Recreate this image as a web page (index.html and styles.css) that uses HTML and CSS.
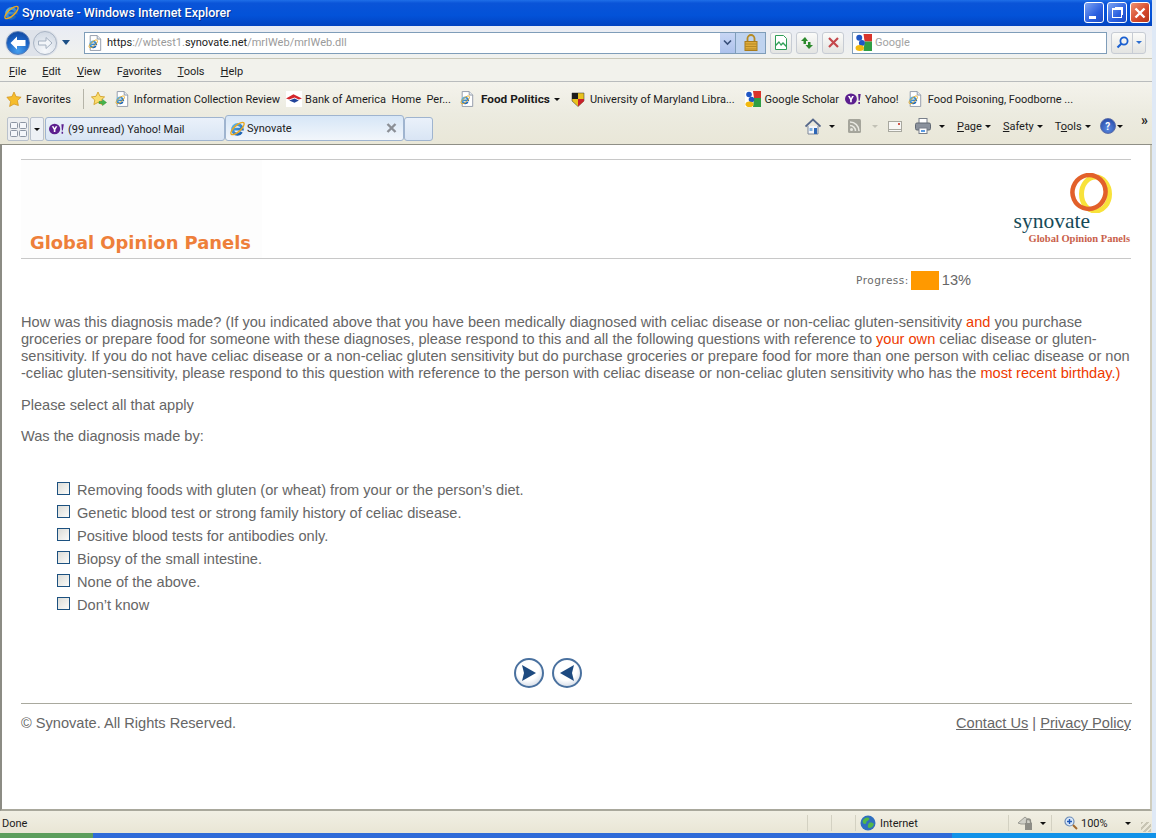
FILE: index.html
```html
<!DOCTYPE html>
<html lang="en">
<head>
  <meta charset="UTF-8">
  <title>Synovate - Windows Internet Explorer</title>
  <link rel="stylesheet" href="styles.css">
</head>
<body>
  <svg class="defs" width="0" height="0">
    <defs>
      <linearGradient id="ie-grad" x1="0" y1="0" x2="1" y2="1">
        <stop offset="0" stop-color="#5cb8ec"/>
        <stop offset="1" stop-color="#1458ad"/>
      </linearGradient>
      <symbol id="ie" viewBox="0 0 16 16">
        <path d="M3.800 8.600h8.700A4.600 4.600 0 1 0 11.800 11.300" fill="none" stroke="url(#ie-grad)" stroke-width="2.700"/>
        <ellipse cx="8" cy="8" rx="8" ry="3" transform="rotate(-42 8 8)" fill="none" stroke="#e9a820" stroke-width="1.300"/>
      </symbol>
      <symbol id="ie-page" viewBox="0 0 16 18">
        <path d="M2.500.5h8l4 4v13h-12z" fill="#fff" stroke="#8a94a4"/>
        <path d="M10.500.5v4h4" fill="#e4e8ef" stroke="#8a94a4"/>
        <use href="#ie" x="0" y="4" width="12" height="12"/>
      </symbol>
      <symbol id="yahoo" viewBox="0 0 20 14">
        <ellipse cx="7" cy="7" rx="7" ry="6.500" fill="#5c1f8f"/>
        <path d="M3.500 3.500h2.300L7 6l1.300-2.500h2.200L8 8v2.800H6V8z" fill="#fff"/>
        <path d="M15.500 1h3l-1.200 8h-1.200zM15.700 10.500h1.900v2.300h-1.900z" fill="#5c1f8f"/>
      </symbol>
      <symbol id="google" viewBox="0 0 16 16">
        <rect width="16" height="16" fill="#fff"/>
        <path d="M8 0h8v7H9z" fill="#d9342b"/>
        <path d="M9 7h7v9H8z" fill="#2f9e44"/>
        <circle cx="4" cy="3.500" r="2.800" fill="#1f56c4"/>
        <circle cx="6.500" cy="8.500" r="2.800" fill="#1f56c4"/>
        <ellipse cx="4.500" cy="13.200" rx="4" ry="2.800" fill="#f2b90f"/>
      </symbol>
    </defs>
  </svg>

  <header class="titlebar">
    <svg width="17" height="17"><use href="#ie"/></svg>
    <span class="title-text">Synovate - Windows Internet Explorer</span>
    <div class="win-buttons">
      <div class="win-btn"><span class="win-min"></span></div>
      <div class="win-btn"><span class="win-max"></span></div>
      <div class="win-btn win-close">
        <svg width="14" height="14" viewBox="0 0 14 14"><path d="M2.500 2.500l9 9M11.500 2.500l-9 9" stroke="#fff" stroke-width="2.400"/></svg>
      </div>
    </div>
  </header>

  <div class="addressbar">
    <div class="nav-pill">
      <div class="nav-circle nav-back">
        <svg width="20" height="20" viewBox="0 0 20 20"><path d="M2.500 10l6.500-6.500V7h8.500v6H9v3.500z" fill="#fff"/></svg>
      </div>
      <div class="nav-circle nav-fwd">
        <svg width="18" height="18" viewBox="0 0 18 18"><path d="M16 9L10 3.500V7H2.500v4H10v3.500z" fill="#f2f5f9" stroke="#a4b0c0"/></svg>
      </div>
    </div>
    <span class="drop-blue"></span>
    <div class="url-box">
      <svg width="14" height="16"><use href="#ie-page"/></svg>
      <span class="url-text">https<span class="url-dim">://wbtest1.</span>synovate.net<span class="url-dim">/mrIWeb/mrIWeb.dll</span></span>
      <div class="url-drop">
        <svg width="9" height="7" viewBox="0 0 9 7"><path d="M1 1.500l3.500 3.500L8 1.500" fill="none" stroke="#39507a" stroke-width="1.600"/></svg>
      </div>
      <div class="url-lock">
        <svg width="14" height="17" viewBox="0 0 14 17">
          <path d="M3.500 8V4.500a3.500 3.500 0 0 1 7 0V8" fill="none" stroke="#b58a24" stroke-width="1.800"/>
          <rect x="1" y="7.500" width="12" height="9" fill="#e0ab3a" stroke="#a87c1c"/>
          <path d="M1 10h12M1 12.500h12M1 15h12" stroke="#b58a24"/>
        </svg>
      </div>
    </div>
    <div class="tool-btn">
      <svg width="12" height="15" viewBox="0 0 12 15"><path d="M.5.500h8l3 3v11H.5z" fill="#fff" stroke="#2f9e57"/><path d="M1 9l3-3 2 3 2-2 3 3v2l-3-3-2 2-2-3-3 3z" fill="#2f9e57"/></svg>
    </div>
    <div class="tool-btn">
      <svg width="14" height="14" viewBox="0 0 14 14"><path d="M5 1L1 5h2.500v3H6V5h2zM9 13l4-4h-2.500V6H8v3H5.500z" fill="#2c8a2c"/></svg>
    </div>
    <div class="tool-btn">
      <svg width="11" height="11" viewBox="0 0 11 11"><path d="M1 1l9 9M10 1l-9 9" stroke="#c4474c" stroke-width="2.200"/></svg>
    </div>
    <div class="search-box">
      <svg width="17" height="17"><use href="#google"/></svg>
      <span class="search-text">Google</span>
    </div>
    <div class="search-btns">
      <div class="search-go">
        <svg width="13" height="13" viewBox="0 0 13 13"><circle cx="8" cy="5" r="3.600" fill="none" stroke="#1a5fd0" stroke-width="1.800"/><path d="M5.500 7.500L1.500 11.500" stroke="#1a5fd0" stroke-width="2.200"/></svg>
      </div>
      <div class="search-drop"><span class="drop-blue drop-small"></span></div>
    </div>
  </div>

  <nav class="menubar">
    <span><u>F</u>ile</span>
    <span><u>E</u>dit</span>
    <span><u>V</u>iew</span>
    <span>F<u>a</u>vorites</span>
    <span><u>T</u>ools</span>
    <span><u>H</u>elp</span>
  </nav>

  <div class="favbar">
    <div class="fav-main">
      <svg width="16" height="16" viewBox="0 0 16 16"><path d="M8 1l2.100 4.600 5 .6-3.700 3.400 1 4.900L8 13.100l-4.400 2.400 1-4.900L.9 6.200l5-.6z" fill="#f6bd2c" stroke="#d08f16" stroke-width=".7"/></svg>
      <span>Favorites</span>
    </div>
    <span class="fav-sep"></span>
    <svg class="fav-add" width="16" height="16" viewBox="0 0 16 16">
      <path d="M7 1l2 4.300 4.600.6-3.400 3.100.9 4.600L7 11.400l-4.100 2.200.9-4.600L.4 5.900 5 5.300z" fill="#f9dc6d" stroke="#cf9a1d" stroke-width=".8"/>
      <path d="M8 10.500h3.500V8.500l4 3-4 3v-2H8z" fill="#43b649" stroke="#2b8a30" stroke-width=".5"/>
    </svg>
    <div class="fav-item fav-first"><svg width="14" height="16"><use href="#ie-page"/></svg><span>Information Collection Review</span></div>
    <div class="fav-item fav-boa">
      <svg width="16" height="16" viewBox="0 0 15 15"><rect width="15" height="15" fill="#fff"/><path d="M0 7l7-4 8 4-3 1-4-2L3 8z" fill="#d4252c"/><path d="M3 9l5-2L12 9 8 11z" fill="#22449a"/></svg>
      <span>Bank of America  Home  Per...</span>
    </div>
    <div class="fav-item fav-politics"><svg width="14" height="16"><use href="#ie-page"/></svg><b>Food Politics</b><span class="drop-black"></span></div>
    <div class="fav-item fav-umd">
      <svg width="14" height="15" viewBox="0 0 14 15"><path d="M1 1h12v8l-6 5.500L1 9z" fill="#e8c21e" stroke="#333" stroke-width=".5"/><path d="M1 1h6v6H1z" fill="#1c1c1c"/><path d="M7 7h6v2l-6 5.500z" fill="#c8202c"/></svg>
      <span>University of Maryland Libra...</span>
    </div>
    <div class="fav-item fav-scholar"><svg width="16" height="16"><use href="#google"/></svg><span>Google Scholar</span></div>
    <div class="fav-item fav-yahoo"><svg width="17" height="12"><use href="#yahoo"/></svg><span>Yahoo!</span></div>
    <div class="fav-item fav-food"><svg width="14" height="16"><use href="#ie-page"/></svg><span>Food Poisoning, Foodborne ...</span></div>
  </div>

  <div class="tabbar">
    <div class="tab-tools">
      <div class="tab-quick">
        <svg width="17" height="15" viewBox="0 0 17 15"><g fill="#f4f6fa" stroke="#8c95a3"><rect x=".5" y=".5" width="7" height="6" rx="1"/><rect x="9.500" y=".5" width="7" height="6" rx="1"/><rect x=".5" y="8.500" width="7" height="6" rx="1"/><rect x="9.500" y="8.500" width="7" height="6" rx="1"/></g></svg>
      </div>
      <div class="tab-list"><span class="drop-black"></span></div>
    </div>
    <div class="tab tab-yahoo">
      <svg width="16" height="12"><use href="#yahoo"/></svg>
      <span>(99 unread) Yahoo! Mail</span>
    </div>
    <div class="tab tab-active">
      <svg width="17" height="17"><use href="#ie"/></svg>
      <span class="tab-name">Synovate</span>
      <svg width="11" height="10" viewBox="0 0 11 10"><path d="M1.500 1l8 8M9.500 1l-8 8" stroke="#8b8f96" stroke-width="2.400"/></svg>
    </div>
    <div class="tab tab-new"></div>
    <div class="cmdbar">
      <div class="cmd cmd-home">
        <svg width="16" height="17" viewBox="0 0 16 17"><path d="M3 8v8h10V8" fill="#f4f6fa" stroke="#7d8697"/><path d="M.5 8.500L8 1.500l7.500 7" fill="none" stroke="#56688a" stroke-width="1.800"/><rect x="9" y="10" width="3" height="6" fill="#2d66b5"/><rect x="4.500" y="10" width="3" height="3" fill="#7fb0de"/></svg>
        <span class="drop-black"></span>
      </div>
      <div class="cmd cmd-rss">
        <svg width="13" height="14" viewBox="0 0 13 14"><rect width="13" height="14" rx="1.500" fill="#a5a59b"/><circle cx="3.500" cy="10.500" r="1.500" fill="#e9e9e2"/><path d="M2 6.500a5.500 5.500 0 0 1 5.500 5.500M2 3a9 9 0 0 1 9 9" fill="none" stroke="#e9e9e2" stroke-width="1.500"/></svg>
        <span class="drop-grey"></span>
      </div>
      <div class="cmd cmd-mail">
        <svg width="14" height="11" viewBox="0 0 14 11"><rect x=".5" y=".5" width="13" height="10" fill="#f7f7f5" stroke="#a8a89f"/><path d="M.5 8.500h13" stroke="#a8a89f"/><rect x="10" y="2" width="2" height="2" fill="#d0574c"/></svg>
      </div>
      <div class="cmd cmd-print">
        <svg width="16" height="16" viewBox="0 0 16 16"><rect x="4" y=".5" width="8" height="5" fill="#fff" stroke="#787f8a"/><rect x=".5" y="5" width="15" height="7" rx="1.500" fill="#8a919c" stroke="#616873"/><rect x="4" y="10" width="8" height="5.500" fill="#fff" stroke="#787f8a"/><rect x="6" y="12" width="4" height="2" fill="#5a9ae0"/></svg>
        <span class="drop-black"></span>
      </div>
      <div class="cmd cmd-text"><span><u>P</u>age</span><span class="drop-black"></span></div>
      <div class="cmd cmd-text"><span><u>S</u>afety</span><span class="drop-black"></span></div>
      <div class="cmd cmd-text"><span>T<u>o</u>ols</span><span class="drop-black"></span></div>
      <div class="cmd cmd-help"><span class="help-ball">?</span><span class="drop-black"></span></div>
      <span class="cmd-more">»</span>
    </div>
  </div>

  <main class="page">
    <div class="survey">
      <div class="brand">
        <div class="brand-left">
          <h1>Global Opinion Panels</h1>
        </div>
        <div class="logo">
          <svg class="logo-ring" width="42" height="40" viewBox="0 0 42 40">
            <ellipse cx="25.500" cy="21" rx="14" ry="17" fill="none" stroke="#f8e23a" stroke-width="5"/>
            <ellipse cx="19" cy="19" rx="16.500" ry="17" transform="rotate(20 19 19)" fill="none" stroke="#e2602a" stroke-width="4.500"/>
          </svg>
          <span class="logo-name">synovate</span>
          <span class="logo-sub">Global Opinion Panels</span>
        </div>
      </div>

      <div class="progress">
        <span class="progress-label">Progress:</span>
        <span class="progress-bar"></span>
        <span class="progress-num">13%</span>
      </div>

      <p class="question">How was this diagnosis made? (If you indicated above that you have been medically diagnosed with celiac disease or non-celiac gluten-sensitivity <em>and</em> you purchase<br>groceries or prepare food for someone with these diagnoses, please respond to this and all the following questions with reference to <em>your own</em> celiac disease or gluten-<br>sensitivity. If you do not have celiac disease or a non-celiac gluten sensitivity but do purchase groceries or prepare food for more than one person with celiac disease or non<br>-celiac gluten-sensitivity, please respond to this question with reference to the person with celiac disease or non-celiac gluten sensitivity who has the <em>most recent birthday.)</em></p>
      <p class="hint">Please select all that apply</p>
      <p class="hint">Was the diagnosis made by:</p>

      <ul class="answers">
        <li><input type="checkbox"><span>Removing foods with gluten (or wheat) from your or the person’s diet.</span></li>
        <li><input type="checkbox"><span>Genetic blood test or strong family history of celiac disease.</span></li>
        <li><input type="checkbox"><span>Positive blood tests for antibodies only.</span></li>
        <li><input type="checkbox"><span>Biopsy of the small intestine.</span></li>
        <li><input type="checkbox"><span>None of the above.</span></li>
        <li><input type="checkbox"><span>Don’t know</span></li>
      </ul>

      <div class="nav-buttons">
        <button class="round-btn" type="button" aria-label="Next">
          <svg width="16" height="16" viewBox="0 0 16 16"><path d="M1 0l14 8-14 8 2-8z" fill="#1d4a80"/></svg>
        </button>
        <button class="round-btn" type="button" aria-label="Back">
          <svg width="16" height="16" viewBox="0 0 16 16"><path d="M15 0L1 8l14 8-2-8z" fill="#1d4a80"/></svg>
        </button>
      </div>

      <footer class="footer">
        <span>© Synovate. All Rights Reserved.</span>
        <span><a href="#">Contact Us</a> | <a href="#">Privacy Policy</a></span>
      </footer>
    </div>
  </main>

  <div class="statusbar">
    <span class="status-text">Done</span>
    <span class="status-cell"></span>
    <span class="status-cell"></span>
    <div class="status-zone">
      <svg width="16" height="16" viewBox="0 0 16 16"><circle cx="8" cy="8" r="7.500" fill="#2f6fc0"/><path d="M3 5c2-3 5-3 6-2s-1 3-2 3 0 3-2 3-3-2-2-4zM9 8c2-1 4 0 5 1-1 3-3 4-5 4s-1-4 0-5z" fill="#53b848"/></svg>
      <span>Internet</span>
    </div>
    <div class="status-shield">
      <svg width="17" height="16" viewBox="0 0 17 16"><path d="M1 8l7-6 6 5v2H4z" fill="#d0d0c8" stroke="#9b9b93"/><rect x="8" y="8" width="7" height="7" fill="#8d8d86"/><path d="M9.500 8V6a2 2 0 0 1 4 0v2" fill="none" stroke="#8d8d86" stroke-width="1.300"/></svg>
      <span class="drop-black"></span>
    </div>
    <div class="status-zoom">
      <svg width="14" height="14" viewBox="0 0 14 14"><circle cx="5.500" cy="5.500" r="4.500" fill="#d9e8fa" stroke="#6c8cb7" stroke-width="1.200"/><path d="M3 5.500h5M5.500 3v5" stroke="#1e57b5" stroke-width="1.400"/><path d="M9 9l4 4" stroke="#a2682c" stroke-width="2"/></svg>
      <span>100%</span>
      <span class="drop-black drop-right"></span>
    </div>
    <span class="grip"></span>
  </div>
  <div class="taskbar">
    <span class="start-strip"></span>
    <span class="task-strip"></span>
    <span class="task-bright"></span>
  </div>
</body>
</html>
```

FILE: styles.css
```css
* {
  box-sizing: border-box;
}

html, body {
  height: 100%;
}

body {
  margin: 0;
  width: 1156px;
  height: 838px;
  display: flex;
  flex-direction: column;
  overflow: hidden;
  background: #dfe9f6;
  font-family: Roboto, sans-serif;
  font-size: 11px;
  color: #1c1c1c;
}

.defs {
  position: absolute;
}

svg {
  display: block;
  flex: none;
}

/* every window row stops short of the desktop strip on the right */
.titlebar,
.addressbar,
.menubar,
.favbar,
.tabbar,
.page,
.statusbar {
  width: 1152px;
}

/* title bar */
.titlebar {
  height: 26px;
  flex: none;
  display: flex;
  align-items: center;
  padding: 0 2px 1px 3px;
  background: linear-gradient(#1f6fe8 0, #0a54d8 12%, #0352d8 60%, #0243c0 100%);
}

.title-text {
  margin-left: 2px;
  color: #fff;
  font-size: 12.500px;
  font-weight: 500;
  text-shadow: 1px 1px 0 #03308f;
}

.win-buttons {
  margin-left: auto;
  display: flex;
  gap: 3px;
}

.win-btn {
  width: 20px;
  height: 21px;
  display: flex;
  align-items: center;
  justify-content: center;
  border: 1px solid #fff;
  border-radius: 3px;
  background: linear-gradient(135deg, #7ea4f2, #2a5fe0 60%, #1d4cc4);
}

.win-close {
  background: linear-gradient(135deg, #ee9170, #d4482a 60%, #b53418);
}

.win-min {
  width: 7px;
  height: 3px;
  margin-top: 10px;
  margin-right: 3px;
  background: #fff;
}

.win-max {
  width: 10px;
  height: 10px;
  border: 1px solid #fff;
  border-top-width: 2px;
  box-shadow: 2px -2px 0 -1px #fff;
}

/* address row */
.addressbar {
  height: 33px;
  flex: none;
  display: flex;
  align-items: center;
  padding: 1px 0 0 5px;
  background: linear-gradient(#e9ecf4, #f1f2ee);
  border-bottom: 1px solid #c9c7b8;
}

.nav-pill {
  display: flex;
  align-items: center;
  gap: 3px;
  padding: 1px;
  border-radius: 14px;
  background: #dfe3ea;
}

.nav-circle {
  width: 24px;
  height: 24px;
  border-radius: 50%;
  display: flex;
  align-items: center;
  justify-content: center;
}

.nav-back {
  border: 1px solid #5a7fb8;
  background: radial-gradient(circle at 50% 85%, #49a0ee, #1a62c4 55%, #0e3f92);
}

.nav-fwd {
  border: 1px solid #a9b4c4;
  background: radial-gradient(circle at 50% 85%, #f6f8fb, #ccd5e1);
}

.drop-blue {
  width: 0;
  height: 0;
  margin-left: 4px;
  border-style: solid;
  border-width: 5px 4px 0 4px;
  border-color: #1c4f86 transparent transparent;
}

.url-box {
  width: 682px;
  height: 22px;
  margin-left: 14px;
  display: flex;
  align-items: center;
  padding-left: 3px;
  background: #fff;
  border: 1px solid #7f9db9;
}

.url-text {
  margin-left: 5px;
  color: #222;
}

.url-dim {
  color: #9a9a9a;
}

.url-drop {
  width: 15px;
  height: 20px;
  margin-left: auto;
  display: flex;
  align-items: center;
  justify-content: center;
  background: linear-gradient(#c8d6f4, #adc2ec);
}

.url-lock {
  width: 30px;
  height: 20px;
  display: flex;
  align-items: center;
  justify-content: center;
  background: #bfd3ef;
  border-left: 1px solid #7f9db9;
}

.tool-btn {
  width: 22px;
  height: 22px;
  margin-left: 4px;
  display: flex;
  align-items: center;
  justify-content: center;
  border: 1px solid #c7ccd4;
  border-radius: 3px;
  background: linear-gradient(#fbfbf9, #e3e4e2);
}

.search-box {
  width: 255px;
  height: 22px;
  margin-left: 8px;
  display: flex;
  align-items: center;
  gap: 3px;
  padding-left: 2px;
  background: #fff;
  border: 1px solid #7f9db9;
}

.search-text {
  color: #a3a3a3;
}

.search-btns {
  height: 22px;
  margin-left: 4px;
  display: flex;
  border: 1px solid #c7ccd4;
  border-radius: 3px;
  background: linear-gradient(#fbfbf9, #e3e4e2);
}

.search-go {
  width: 21px;
  display: flex;
  align-items: center;
  justify-content: center;
  border-right: 1px solid #c7ccd4;
}

.search-drop {
  width: 12px;
  display: flex;
  align-items: center;
  justify-content: center;
}

.drop-small {
  margin-left: 0;
  border-color: #2d6fd0 transparent transparent;
  border-width: 3px 3px 0 3px;
}

/* menu row */
.menubar {
  height: 23px;
  flex: none;
  display: flex;
  align-items: center;
  gap: 16px;
  padding: 2px 0 0 9px;
  background: #f2f2ec;
  border-bottom: 1px solid #b9bcbd;
}

/* favorites row */
.favbar {
  height: 32px;
  flex: none;
  display: flex;
  align-items: center;
  padding: 3px 0 1px 6px;
  background: linear-gradient(#f4f3ec, #ecebe0);
  white-space: pre;
}

.fav-main {
  display: flex;
  align-items: center;
  gap: 4px;
}

.fav-sep {
  width: 1px;
  height: 20px;
  margin: 0 7px 0 12px;
  background: #b5b4a8;
}

.fav-item {
  display: flex;
  align-items: center;
  gap: 5px;
}

.fav-first {
  margin-left: 8px;
}

.fav-boa {
  margin-left: 6px;
  gap: 3px;
}

.fav-politics {
  margin-left: 9px;
  gap: 7px;
}

.fav-politics b {
  font-size: 11.800px;
}

.fav-politics .drop-black {
  margin-left: -3px;
}

.fav-umd {
  margin-left: 11px;
}

.fav-scholar {
  margin-left: 10px;
  gap: 4px;
}

.fav-yahoo {
  margin-left: 6px;
  gap: 3px;
}

.fav-food {
  margin-left: 9px;
  gap: 6px;
}

.drop-black {
  width: 0;
  height: 0;
  border-style: solid;
  border-width: 3px 3px 0 3px;
  border-color: #111 transparent transparent;
}

.drop-grey {
  width: 0;
  height: 0;
  border-style: solid;
  border-width: 3px 3px 0 3px;
  border-color: #c2c1b6 transparent transparent;
}

/* tabs + command bar */
.tabbar {
  height: 31px;
  flex: none;
  display: flex;
  align-items: flex-end;
  padding: 0 0 3px 7px;
  background: linear-gradient(#ecebe0, #e9e7d8);
  border-bottom: 1px solid #8f8f86;
}

.tab-tools {
  height: 24px;
  display: flex;
  gap: 1px;
}

.tab-quick {
  width: 22px;
  display: flex;
  align-items: center;
  justify-content: center;
  border: 1px solid #b9c1cc;
  border-radius: 2px;
  background: #eceef0;
}

.tab-list {
  width: 14px;
  display: flex;
  align-items: center;
  justify-content: center;
  border: 1px solid #b9c1cc;
  border-radius: 2px;
  background: #eef1f5;
}

.tab {
  display: flex;
  align-items: center;
  border: 1px solid #9fb4cf;
  border-radius: 3px;
  background: linear-gradient(#eaf1fa, #d9e5f4);
}

.tab-yahoo {
  width: 180px;
  height: 24px;
  margin-left: 1px;
  padding-left: 3px;
  gap: 3px;
}

.tab-active {
  width: 179px;
  height: 26px;
  padding: 0 6px 0 3px;
  gap: 1px;
  background: linear-gradient(#d6e6f7, #f2f6fb);
}

.tab-name {
  flex: 1;
}

.tab-new {
  width: 29px;
  height: 24px;
}

.cmdbar {
  flex: 1;
  height: 24px;
  display: flex;
  align-items: center;
  padding: 0 0 6px 372px;
  position: relative;
}

.cmd {
  display: flex;
  align-items: center;
}

.cmd-home {
  gap: 8px;
}

.cmd-rss {
  margin-left: 13px;
  gap: 11px;
}

.cmd-mail {
  margin-left: 10px;
}

.cmd-print {
  margin-left: 13px;
  gap: 8px;
}

.cmd-text {
  margin-left: 12px;
  gap: 3px;
}

.cmd-help {
  margin-left: 9px;
  gap: 1px;
}

.help-ball {
  width: 16px;
  height: 16px;
  display: flex;
  align-items: center;
  justify-content: center;
  border-radius: 50%;
  border: 1px solid #5c6ea8;
  background: radial-gradient(circle at 50% 70%, #5b8be0, #1e3fa0);
  color: #fff;
  font-weight: 700;
  font-size: 10px;
}

.cmd-more {
  position: absolute;
  top: -4px;
  right: 4px;
  font-size: 14px;
  font-weight: 700;
  line-height: 14px;
}

/* page */
.page {
  flex: 1;
  min-height: 0;
  padding: 14px 0 0 19px;
  background: #fff;
  border-left: 2px solid #8c8c84;
  border-right: 2px solid #cfcdbe;
  border-bottom: 2px solid #a9a89c;
  font-family: "Liberation Sans", sans-serif;
  font-size: 14.600px;
  color: #666;
}

.survey {
  width: 1110px;
}

.brand {
  height: 100px;
  display: flex;
  justify-content: space-between;
  border-top: 1px solid #c8c8c8;
  border-bottom: 1px solid #c8c8c8;
}

.brand-left {
  width: 241px;
  display: flex;
  align-items: flex-end;
  padding: 0 0 4px 9px;
  background: #fdfdfd;
}

.brand-left h1 {
  margin: 0;
  font-family: "DejaVu Sans", sans-serif;
  font-size: 17.900px;
  font-weight: 700;
  color: #ee7f3a;
  line-height: 22px;
}

.logo {
  width: 120px;
  display: flex;
  flex-direction: column;
  align-items: flex-end;
  font-family: "Liberation Serif", serif;
}

.logo-ring {
  margin: 13px 19px 0 0;
}

.logo-name {
  margin: -3px 41px 0 0;
  font-size: 21.500px;
  line-height: 22px;
  color: #164a58;
}

.logo-sub {
  margin: 1px 1px 0 0;
  font-size: 10.500px;
  font-weight: 700;
  line-height: 11px;
  color: #c9614a;
}

.progress {
  height: 20px;
  margin-top: 11px;
  display: flex;
  align-items: center;
  padding-left: 835px;
}

.progress-label {
  font-family: "DejaVu Sans", sans-serif;
  font-size: 10.500px;
  letter-spacing: .5px;
  color: #6a6a6a;
}

.progress-bar {
  width: 28px;
  height: 19px;
  margin-left: 2px;
  background: #f90;
}

.progress-num {
  margin-left: 3px;
}

.question,
.hint {
  margin: 0;
  line-height: 17px;
}

.question {
  margin-top: 24px;
  white-space: nowrap;
}

.question em {
  font-style: normal;
  color: #ee3a00;
}

.hint {
  margin-top: 15px;
}

.hint + .hint {
  margin-top: 14px;
}

.answers {
  list-style: none;
  margin: 33px 0 0;
  padding: 0 0 0 36px;
}

.answers li {
  height: 23px;
  display: flex;
  align-items: center;
  gap: 7px;
}

.answers input {
  appearance: none;
  width: 13px;
  height: 13px;
  margin: 0 0 2px;
  border: 1px solid #1c5180;
  background: linear-gradient(135deg, #dcdcd7, #fbfbf9);
}

.nav-buttons {
  margin-top: 42px;
  display: flex;
  justify-content: center;
  gap: 8px;
  padding-right: 56px;
}

.round-btn {
  width: 30px;
  height: 30px;
  padding: 0;
  display: flex;
  align-items: center;
  justify-content: center;
  border: 2px solid #4a719f;
  border-radius: 50%;
  background: radial-gradient(circle at 45% 35%, #fff 50%, #bcc8da);
}

.footer {
  margin-top: 15px;
  padding: 11px 1px 0 0;
  width: 1111px;
  display: flex;
  justify-content: space-between;
  border-top: 1px solid #a9a99e;
  line-height: 17px;
}

.footer a {
  color: #666;
}

/* status bar */
.statusbar {
  height: 22px;
  flex: none;
  display: flex;
  align-items: center;
  padding-top: 2px;
  background: linear-gradient(#f1efe4, #e9e6d5);
  position: relative;
}

.status-text {
  width: 807px;
  padding-left: 2px;
}

.status-cell {
  width: 24px;
  height: 16px;
  border-left: 1px solid #d3d1c2;
}

.status-zone {
  width: 154px;
  height: 16px;
  display: flex;
  align-items: center;
  gap: 4px;
  padding-left: 4px;
  border-left: 1px solid #d3d1c2;
  border-right: 1px solid #d3d1c2;
}

.status-shield {
  width: 43px;
  height: 16px;
  display: flex;
  align-items: center;
  gap: 6px;
  padding-left: 8px;
  border-right: 1px solid #d3d1c2;
}

.status-zoom {
  width: 85px;
  display: flex;
  align-items: center;
  gap: 3px;
  padding-left: 12px;
}

.drop-right {
  margin-left: 14px;
}

.grip {
  width: 10px;
  height: 10px;
  position: absolute;
  right: 1px;
  bottom: 1px;
  background: repeating-linear-gradient(135deg, #c8c5b4 0 2px, transparent 2px 4px);
}

.taskbar {
  height: 5px;
  flex: none;
  display: flex;
}

.start-strip {
  width: 93px;
  background: #5c9e5c;
}

.task-strip {
  flex: 1;
  background: #2f6bd8;
}

.task-bright {
  width: 204px;
  background: #1192e8;
}
```
